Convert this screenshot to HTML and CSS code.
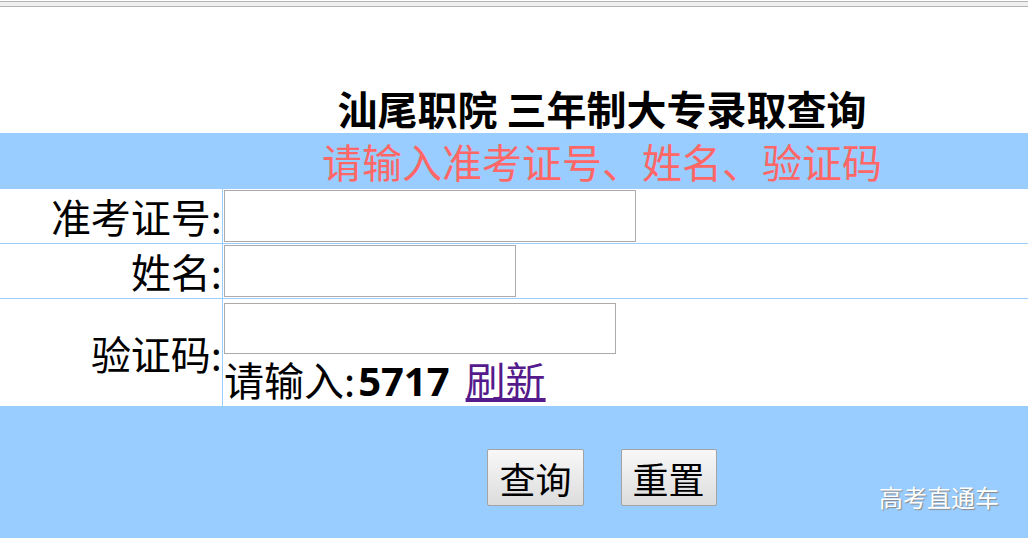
FILE: index.html
```html
<!DOCTYPE html>
<html lang="zh-CN">
<head>
  <meta charset="UTF-8" />
  <title>汕尾职院 三年制大专录取查询</title>
  <link rel="stylesheet" href="styles.css">
</head>
<body>
  <div class="topbar"></div>
  <h1 class="title">汕尾职院 三年制大专录取查询</h1>

  <form id="queryForm">
    <table class="query">
      <tr>
        <td colspan="2" class="tip">请输入准考证号、姓名、验证码</td>
      </tr>
      <tr class="row">
        <td class="label">准考证号:</td>
        <td class="field"><input class="input input-id" name="ksh" /></td>
      </tr>
      <tr class="row">
        <td class="label">姓名:</td>
        <td class="field"><input class="input input-name" name="xm" /></td>
      </tr>
      <tr class="row row-code">
        <td class="label">验证码:</td>
        <td class="field">
          <input class="input input-code" name="yzm" />
          <div class="code-line">请输入:<strong>5717</strong> <a href="#" class="refresh">刷新</a></div>
        </td>
      </tr>
    </table>

    <div class="actions">
      <button type="submit" class="btn">查询</button>
      <button type="reset" class="btn">重置</button>
      <span class="brand">高考直通车</span>
    </div>
  </form>
</body>
</html>
```

FILE: styles.css
```css
body {
  margin: 0;
  padding: 0;
  background: #fff;
  font-family: "Noto Sans CJK SC", "Microsoft YaHei", sans-serif;
  color: #000;
  overflow: hidden;
}
.topbar {
  margin-top: 1px;
  height: 4px;
  background: #efefef;
  border-top: 1px solid #b4b4b4;
  border-bottom: 1px solid #b4b4b4;
}
.title {
  margin: 0;
  padding: 78px 0 2px 176px;
  font-size: 40px;
  line-height: 46px;
  font-weight: bold;
  text-align: center;
}
.query {
  width: 100%;
  border-collapse: separate;
  border-spacing: 0;
}
.query td {
  padding: 0;
}
.tip {
  background: #99ccff;
  color: #ff6666;
  font-size: 40px;
  line-height: 56px;
  text-align: center;
  padding-left: 176px !important;
}
.row td {
  border-bottom: 1px solid #99ccff;
  height: 53px;
}
.row-code td {
  border-bottom: none;
  height: 106px;
}
.label {
  width: 222px;
  border-right: 1px solid #99ccff;
  text-align: right;
  font-size: 40px;
  line-height: 46px;
  vertical-align: middle;
}
.field {
  vertical-align: top;
  padding: 1px 0 0 1px !important;
}
.input {
  display: block;
  box-sizing: border-box;
  height: 52px;
  border: 1px solid #ababab;
  background: #fff;
  padding: 0 4px;
  font-size: 20px;
}
.input-id {
  width: 412px;
}
.input-name {
  width: 292px;
}
.input-code {
  width: 392px;
  height: 51px;
  margin-top: 3px;
}
.code-line {
  font-size: 40px;
  line-height: 50px;
  white-space: nowrap;
}
.code-line strong {
  font-family: "Open Sans", "Noto Sans CJK SC", sans-serif;
  font-weight: bold;
  margin-left: 3px;
  margin-right: 7px;
}
.refresh {
  color: #551a8b;
  text-decoration: underline;
}
.actions {
  position: relative;
  background: #99ccff;
  height: 140px;
  padding: 43px 0 0 176px;
  box-sizing: border-box;
  display: flex;
  justify-content: center;
  align-items: flex-start;
  gap: 37px;
}
.btn {
  height: 57px;
  padding: 0 11px;
  font-family: "Noto Sans CJK SC", "Microsoft YaHei", sans-serif;
  font-size: 36px;
  line-height: 1;
  color: #000;
  background: linear-gradient(#f8f8f8, #dcdcdc);
  border: 1px solid #a3a3a3;
  border-radius: 2px;
  cursor: pointer;
}
.brand {
  position: absolute;
  right: 29px;
  top: 79px;
  font-size: 24px;
  line-height: 24px;
  color: #fff;
  text-shadow: 1px 1px 1px #888;
}
```
